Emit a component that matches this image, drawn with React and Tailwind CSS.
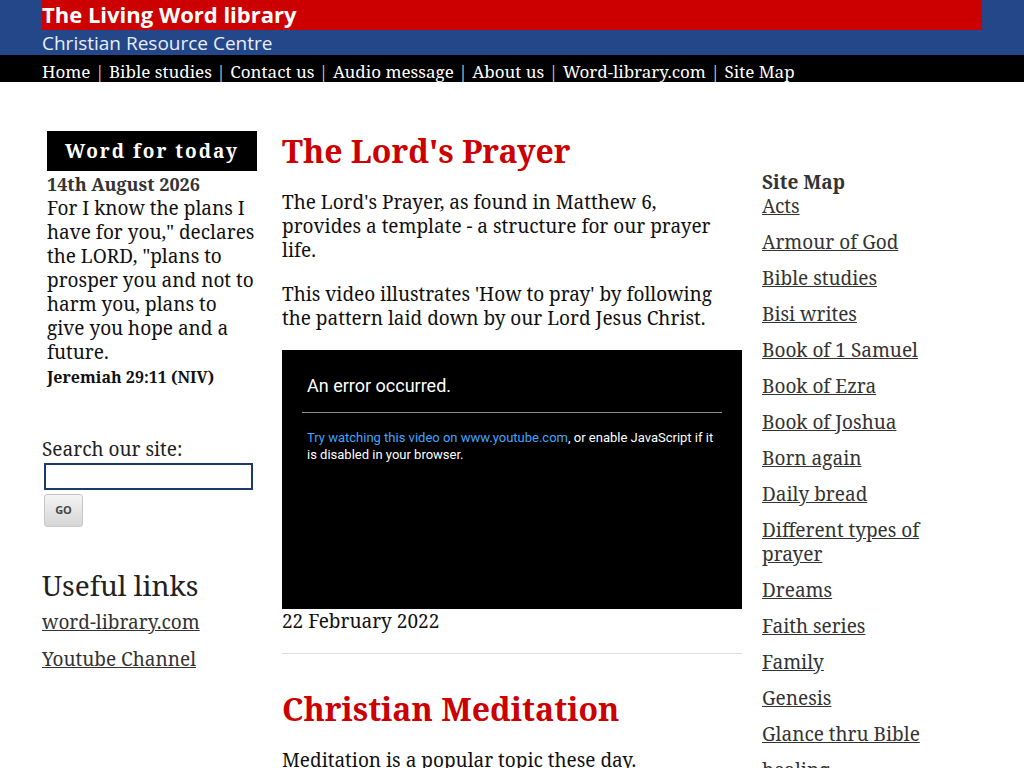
import React from "react";

const navItems = [
  "Home",
  "Bible studies",
  "Contact us",
  "Audio message",
  "About us",
  "Word-library.com",
  "Site Map",
];

const siteMap = [
  "Acts",
  "Armour of God",
  "Bible studies",
  "Bisi writes",
  "Book of 1 Samuel",
  "Book of Ezra",
  "Book of Joshua",
  "Born again",
  "Daily bread",
  "Different types of prayer",
  "Dreams",
  "Faith series",
  "Family",
  "Genesis",
  "Glance thru Bible",
  "healing",
];

const serif = "font-['Noto_Serif','DejaVu_Serif',serif]";

function Header() {
  return (
    <header className="bg-[#24478a]">
      <div className="w-[940px] mx-auto">
        <div className="bg-[#cc0000] h-[30px]">
          <h1 className="font-['Open_Sans','Noto_Sans',sans-serif] font-bold text-[22px] leading-[29px] text-white">
            The Living Word library
          </h1>
        </div>
        <p className="h-[25px] font-['Open_Sans','Noto_Sans',sans-serif] text-[19px] leading-[27px] text-[#e8eef8]">
          Christian Resource Centre
        </p>
      </div>
      <nav className="bg-black h-[27px]">
        <ul className={`w-[940px] mx-auto flex text-white text-[17px] leading-[34px] ${serif}`}>
          {navItems.map((item, i) => (
            <li key={item} className="flex">
              {i > 0 && <span className="px-[4.5px] text-[#d0d0d0]">|</span>}
              <a href="#">{item}</a>
            </li>
          ))}
        </ul>
      </nav>
    </header>
  );
}

function LeftColumn() {
  return (
    <aside className="w-[215px] shrink-0">
      <div className="ml-[5px] mt-[49px]">
        <div className="bg-black h-[40px] flex items-center justify-center text-white font-bold text-[19px] tracking-[2px]">
          Word for today
        </div>
        <p className="text-[18px] leading-[24px] font-bold text-[#333] mt-[1px]">14th August 2026</p>
        <p className="text-[19px] leading-[24px] text-[#111]">
          For I know the plans I have for you," declares the LORD, "plans to prosper you and not to harm
          you, plans to give you hope and a future.
        </p>
        <p className="text-[16px] leading-[24px] font-bold text-[#111] mt-[1px]">Jeremiah 29:11 (NIV)</p>
      </div>

      <form className="mt-[48px]" onSubmit={(e) => e.preventDefault()}>
        <label className="block text-[19px] leading-[24px] text-[#222]">Search our site:</label>
        <input
          type="text"
          className="block ml-[2px] mt-[2px] w-[209px] h-[27px] border-2 border-[#1b3a6b] bg-white outline-none"
        />
        <button
          type="submit"
          className="ml-[2px] mt-[4px] w-[39px] h-[33px] rounded-[3px] border border-[#c6c6c6] bg-gradient-to-b from-[#f4f4f4] to-[#d6d6d6] font-['Open_Sans',sans-serif] font-bold text-[11px] text-[#444]"
        >
          GO
        </button>
      </form>

      <h2 className="mt-[40px] text-[28px] leading-[36px] text-[#222]">Useful links</h2>
      <ul className="mt-[1px]">
        <li className="leading-[36px]">
          <a href="#" className="text-[19px] text-[#333] underline">word-library.com</a>
        </li>
        <li className="leading-[36px]">
          <a href="#" className="text-[19px] text-[#333] underline">Youtube Channel</a>
        </li>
      </ul>
    </aside>
  );
}

function VideoError() {
  return (
    <div className="bg-black h-[259px] px-[20px] pt-[24px] font-['Roboto',sans-serif]">
      <p className="px-[5px] text-white text-[18px] leading-[24px]">An error occurred.</p>
      <div className="mt-[14px] border-t border-[#8a8a8a]" />
      <p className="px-[5px] mt-[16px] text-[13px] leading-[17px] text-white">
        <a href="#" className="text-[#3ea6ff]">Try watching this video on www.youtube.com</a>, or enable
        JavaScript if it is disabled in your browser.
      </p>
    </div>
  );
}

function MainColumn() {
  return (
    <main className="w-[460px] shrink-0 ml-[25px]">
      <h2 className="mt-[48px] text-[32px] leading-[42px] font-bold text-[#cc0000]">The Lord's Prayer</h2>
      <p className="mt-[18px] pr-[20px] text-[19px] leading-[24px] text-[#111]">
        The Lord's Prayer, as found in Matthew 6, provides a template - a structure for our prayer life.
      </p>
      <p className="mt-[20px] pr-[20px] text-[19px] leading-[24px] text-[#111]">
        This video illustrates 'How to pray' by following the pattern laid down by our Lord Jesus Christ.
      </p>
      <div className="mt-[20px]">
        <VideoError />
      </div>
      <p className="text-[19px] leading-[24px] text-[#111]">22 February 2022</p>
      <hr className="mt-[20px] border-t border-[#ddd]" />
      <h2 className="mt-[34px] text-[32px] leading-[42px] font-bold text-[#cc0000]">Christian Meditation</h2>
      <p className="mt-[18px] pr-[20px] text-[19px] leading-[24px] text-[#111]">
        Meditation is a popular topic these day.
      </p>
    </main>
  );
}

function RightColumn() {
  return (
    <aside className="w-[220px] shrink-0 ml-[20px] pt-[88px]">
      <h3 className="text-[19px] leading-[24px] font-bold text-[#333]">Site Map</h3>
      <ul className="flex flex-col gap-[12px]">
        {siteMap.map((item) => (
          <li key={item} className="text-[19px] leading-[24px] w-[180px]">
            <a href="#" className="text-[#333] underline">{item}</a>
          </li>
        ))}
      </ul>
    </aside>
  );
}

export default function App() {
  return (
    <div className={`min-h-screen bg-white ${serif}`}>
      <Header />
      <div className="w-[940px] mx-auto flex">
        <LeftColumn />
        <MainColumn />
        <RightColumn />
      </div>
    </div>
  );
}
